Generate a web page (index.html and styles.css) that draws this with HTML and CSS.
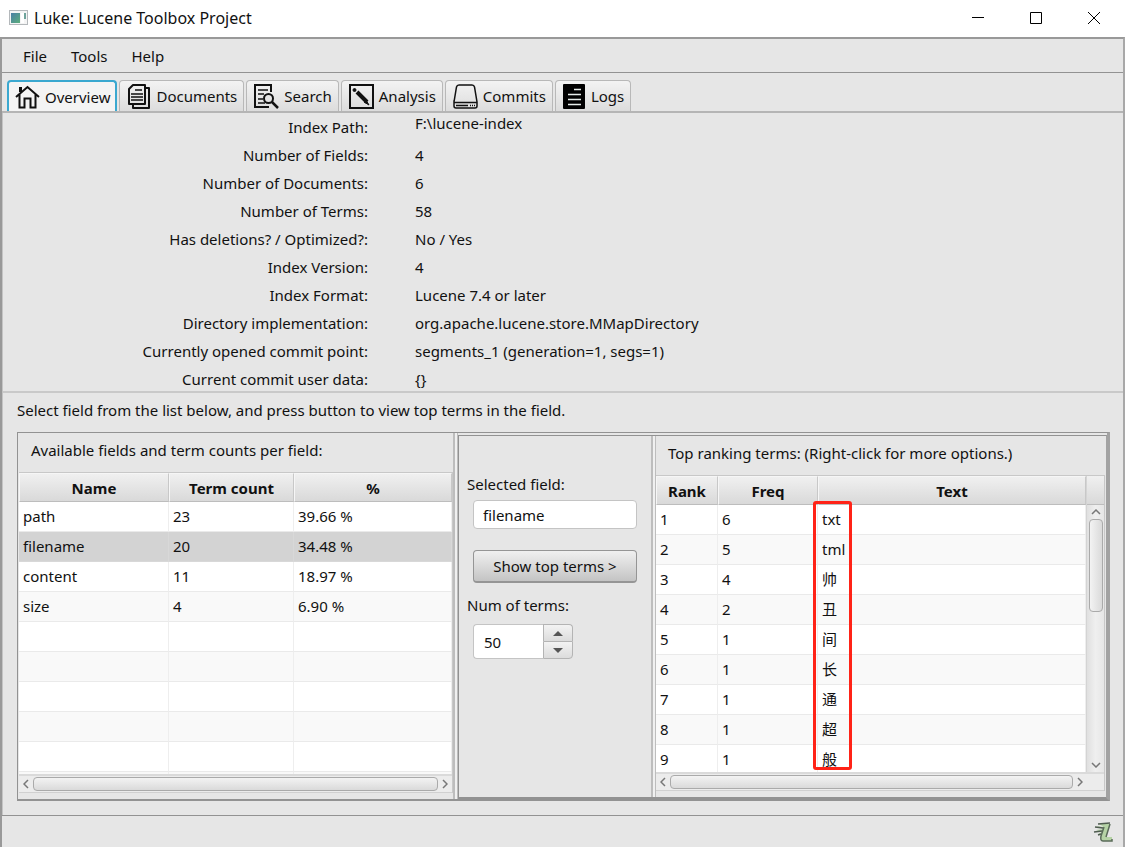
FILE: index.html
```html
<!DOCTYPE html>
<html lang="en">
<head>
    <meta charset="UTF-8">
    <meta name="viewport" content="width=device-width, initial-scale=1.0">
    <title>Luke: Lucene Toolbox Project</title>
    <link rel="stylesheet" href="styles.css">
</head>
<body>

<header class="titlebar">
    <svg class="app-icon" width="19" height="16" viewBox="0 0 19 16">
        <defs>
            <linearGradient id="appFill" x1="0" y1="0" x2="1" y2="1">
                <stop offset="0" stop-color="#4a7fa5"/>
                <stop offset="1" stop-color="#5cae7c"/>
            </linearGradient>
        </defs>
        <rect x="0.5" y="0.5" width="18" height="14" fill="#f4f4f4" stroke="#b4b8bb"/>
        <rect x="2" y="3" width="9" height="10" fill="url(#appFill)"/>
        <rect x="12" y="3" width="3" height="10" fill="#fff"/>
        <rect x="15" y="3" width="2" height="6" fill="#6fa39b"/>
    </svg>
    <h1>Luke: Lucene Toolbox Project</h1>
    <div class="window-buttons">
        <button aria-label="Minimize"><svg width="12" height="12" viewBox="0 0 12 12"><path d="M0 5.500h12"/></svg></button>
        <button aria-label="Maximize"><svg width="12" height="12" viewBox="0 0 12 12"><path d="M.5.5h11v11H.5z"/></svg></button>
        <button aria-label="Close"><svg width="12" height="12" viewBox="0 0 12 12"><path d="M0 0l12 12M12 0L0 12"/></svg></button>
    </div>
</header>

<div class="window">
    <nav class="menubar">
        <button>File</button>
        <button>Tools</button>
        <button>Help</button>
    </nav>

    <div class="tabs">
        <button class="tab active">
            <svg width="25" height="24" viewBox="0 0 25 24" fill="none" stroke="#111" stroke-width="2">
                <path d="M1 12L12.500 2 24 12M4.500 9V22.500H9.500V13.500H15.500V22.500H20.500V9"/>
                <path d="M5.500 7V2" stroke-width="3"/>
            </svg>
            Overview
        </button>
        <button class="tab">
            <svg width="24" height="25" viewBox="0 0 24 25" fill="none" stroke="#111" stroke-width="2">
                <path d="M6 1H18V20H2V5z" stroke-linejoin="round"/>
                <path d="M19 4H22V24H6V21" stroke-linejoin="round"/>
                <path d="M8 6h7M4 10h12M4 13h12M4 16h12" stroke-width="1.500"/>
            </svg>
            Documents
        </button>
        <button class="tab">
            <svg width="25" height="25" viewBox="0 0 25 25" fill="none" stroke="#111" stroke-width="2">
                <path d="M17 8V1H1V23H15"/>
                <path d="M4 6h10M4 10h6M4 15h5M4 19h7" stroke-width="1.500"/>
                <circle cx="14.500" cy="14.500" r="4.500"/>
                <path d="M18 18l6 6" stroke-width="2.500"/>
            </svg>
            Search
        </button>
        <button class="tab">
            <svg width="25" height="25" viewBox="0 0 25 25" fill="none" stroke="#111">
                <rect x="1" y="1" width="23" height="23" stroke-width="2"/>
                <circle cx="5.500" cy="6" r="1.500" fill="#111"/>
                <path d="M8 8l10 10" stroke-width="4"/>
                <path d="M17 16l3 5-5-3z" fill="#111"/>
            </svg>
            Analysis
        </button>
        <button class="tab">
            <svg width="25" height="25" viewBox="0 0 25 25" fill="none" stroke="#111" stroke-width="1.500">
                <path d="M1 18L3.500 3Q4 1 6 1H19Q21 1 21.500 3L24 18V22Q24 24 22 24H3Q1 24 1 22V18Q1.500 18.500 3 18.500H22Q23.500 18.500 24 18"/>
                <path d="M3 21.500h12M17 21.500h1M19 21.500h1M21 21.500h1"/>
            </svg>
            Commits
        </button>
        <button class="tab">
            <svg width="23" height="25" viewBox="0 0 23 25">
                <rect width="22" height="25" rx="1" fill="#000"/>
                <path d="M11 5.500h7M5 10.500h13M5 15.500h13M5 20.500h13" stroke="#e6ece9" stroke-width="1.500"/>
            </svg>
            Logs
        </button>
    </div>

    <main class="content">
        <dl class="details">
            <dt>Index Path:</dt><dd class="path">F:\lucene-index</dd>
            <dt>Number of Fields:</dt><dd>4</dd>
            <dt>Number of Documents:</dt><dd>6</dd>
            <dt>Number of Terms:</dt><dd>58</dd>
            <dt>Has deletions? / Optimized?:</dt><dd>No / Yes</dd>
            <dt>Index Version:</dt><dd>4</dd>
            <dt>Index Format:</dt><dd>Lucene 7.4 or later</dd>
            <dt>Directory implementation:</dt><dd>org.apache.lucene.store.MMapDirectory</dd>
            <dt>Currently opened commit point:</dt><dd>segments_1 (generation=1, segs=1)</dd>
            <dt>Current commit user data:</dt><dd>{}</dd>
        </dl>

        <section class="terms">
            <p class="hint">Select field from the list below, and press button to view top terms in the field.</p>

            <div class="split">
                <div class="pane fields-pane">
                    <h2>Available fields and term counts per field:</h2>
                    <div class="table-view">
                        <div class="rows">
                            <table class="fields">
                                <colgroup><col class="name"><col class="count"><col></colgroup>
                                <thead>
                                    <tr><th>Name</th><th>Term count</th><th>%</th></tr>
                                </thead>
                                <tbody>
                                    <tr><td>path</td><td>23</td><td>39.66 %</td></tr>
                                    <tr class="selected"><td>filename</td><td>20</td><td>34.48 %</td></tr>
                                    <tr><td>content</td><td>11</td><td>18.97 %</td></tr>
                                    <tr><td>size</td><td>4</td><td>6.90 %</td></tr>
                                    <tr><td></td><td></td><td></td></tr>
                                    <tr><td></td><td></td><td></td></tr>
                                    <tr><td></td><td></td><td></td></tr>
                                    <tr><td></td><td></td><td></td></tr>
                                    <tr><td></td><td></td><td></td></tr>
                                    <tr><td></td><td></td><td></td></tr>
                                </tbody>
                            </table>
                        </div>
                        <div class="hscroll">
                            <button aria-label="Scroll left"><svg width="6" height="10" viewBox="0 0 6 10"><path d="M5 1L1 5l4 4"/></svg></button>
                            <div class="thumb"></div>
                            <button aria-label="Scroll right"><svg width="6" height="10" viewBox="0 0 6 10"><path d="M1 1l4 4-4 4"/></svg></button>
                        </div>
                    </div>
                </div>

                <div class="divider"></div>

                <div class="split inner">
                    <form class="pane form-pane">
                        <label for="field">Selected field:</label>
                        <input type="text" id="field" value="filename">
                        <button type="button" class="show-terms">Show top terms &gt;</button>
                        <label for="num">Num of terms:</label>
                        <div class="spinner">
                            <input type="text" id="num" value="50">
                            <div class="arrows">
                                <button type="button" aria-label="Increase"><svg width="10" height="5" viewBox="0 0 10 5"><path d="M0 5l5-5 5 5z"/></svg></button>
                                <button type="button" aria-label="Decrease"><svg width="10" height="5" viewBox="0 0 10 5"><path d="M0 0l5 5 5-5z"/></svg></button>
                            </div>
                        </div>
                    </form>

                    <div class="divider"></div>

                    <div class="pane terms-pane">
                        <h2>Top ranking terms: (Right-click for more options.)</h2>
                        <div class="table-view with-vscroll">
                            <div class="rows">
                                <table class="ranking">
                                    <colgroup><col class="rank"><col class="freq"><col></colgroup>
                                    <thead>
                                        <tr><th>Rank</th><th>Freq</th><th>Text</th></tr>
                                    </thead>
                                    <tbody>
                                        <tr><td>1</td><td>6</td><td>txt</td></tr>
                                        <tr><td>2</td><td>5</td><td>tml</td></tr>
                                        <tr><td>3</td><td>4</td><td lang="zh">帅</td></tr>
                                        <tr><td>4</td><td>2</td><td lang="zh">丑</td></tr>
                                        <tr><td>5</td><td>1</td><td lang="zh">间</td></tr>
                                        <tr><td>6</td><td>1</td><td lang="zh">长</td></tr>
                                        <tr><td>7</td><td>1</td><td lang="zh">通</td></tr>
                                        <tr><td>8</td><td>1</td><td lang="zh">超</td></tr>
                                        <tr><td>9</td><td>1</td><td lang="zh">般</td></tr>
                                    </tbody>
                                </table>
                            </div>
                            <div class="vscroll">
                                <div class="corner"></div>
                                <button aria-label="Scroll up"><svg width="10" height="6" viewBox="0 0 10 6"><path d="M1 5l4-4 4 4"/></svg></button>
                                <div class="thumb"></div>
                                <button class="down" aria-label="Scroll down"><svg width="10" height="6" viewBox="0 0 10 6"><path d="M1 1l4 4 4-4"/></svg></button>
                            </div>
                            <div class="hscroll">
                                <button aria-label="Scroll left"><svg width="6" height="10" viewBox="0 0 6 10"><path d="M5 1L1 5l4 4"/></svg></button>
                                <div class="thumb"></div>
                                <button aria-label="Scroll right"><svg width="6" height="10" viewBox="0 0 6 10"><path d="M1 1l4 4-4 4"/></svg></button>
                            </div>
                            <div class="highlight"></div>
                        </div>
                    </div>
                </div>
            </div>
        </section>
    </main>

    <footer class="statusbar">
        <svg width="20" height="20" viewBox="0 0 20 20">
            <path d="M6 2H17L13 15H19V19H10Q7 18 8 13L5 12L9 10L3 8L10 7L3 4L11 5z" fill="#b5d3a5"/>
            <path d="M5 2L17 1M2 5L10 6M1 10L9 9M5 13L8 12" stroke="#4f5c50" stroke-width="1.500" fill="none"/>
            <path d="M17 2L13 15M11 5L8 14Q7 19 10 19H19V17" stroke="#596b58" stroke-width="1.500" fill="none"/>
        </svg>
    </footer>
</div>

</body>
</html>
```
FILE: styles.css
```css
* {
    box-sizing: border-box;
}

body {
    display: flex;
    flex-direction: column;
    min-height: 100vh;
    margin: 0;
    font-family: "Noto Sans", "Noto Sans CJK SC", sans-serif;
    font-size: 15px;
    line-height: 20px;
    color: #111;
    background-color: #e6e6e6;
}

button,
input {
    font: inherit;
    color: inherit;
}

button {
    display: flex;
    align-items: center;
    justify-content: center;
    margin: 0;
    padding: 0;
    border: none;
    background: none;
}

h1,
h2 {
    margin: 0;
    font-size: 15px;
    font-weight: normal;
}

/* Title bar */
.titlebar {
    display: flex;
    align-items: center;
    height: 37px;
    padding: 0 2px 2px 9px;
    background-color: #fff;
}

.titlebar h1 {
    margin-left: 6px;
    font-size: 16px;
}

.window-buttons {
    display: flex;
    margin-left: auto;
}

.window-buttons button {
    width: 58px;
    height: 35px;
}

.window-buttons svg {
    fill: none;
    stroke: #000;
}

/* Window frame */
.window {
    display: flex;
    flex: 1;
    flex-direction: column;
    border: 2px solid #999;
    border-right-color: #a8a8a8;
    border-bottom: none;
}

.menubar {
    display: flex;
    gap: 24px;
    height: 34px;
    padding: 0 21px;
    border-bottom: 1px solid #929292;
}

.tabs {
    display: flex;
    gap: 2px;
    height: 40px;
    padding: 7px 5px 0;
    border-bottom: 2px solid #b5b5b5;
}

.tab {
    gap: 5px;
    padding: 0 6px 0 7px;
    border: 1px solid #b8b8b8;
    border-bottom: none;
    border-radius: 4px 4px 0 0;
    background: linear-gradient(#f3f3f3, #dcdcdc);
}

.tab.active {
    padding: 0 5px 0 6px;
    border: 2px solid #3aa8d0;
    border-bottom: none;
    background: #f4f4f4;
}

/* Index details */
.content {
    display: flex;
    flex: 1;
    flex-direction: column;
    border-left: 1px solid #c4c4c4;
}

.details {
    display: grid;
    grid-template-columns: 365px 1fr;
    grid-auto-rows: 28px;
    column-gap: 47px;
    align-items: center;
    margin: 0;
    box-shadow: inset 0 -2px #c9c9c9;
}

.details dt {
    text-align: right;
}

.details dd {
    margin: 0;
}

.details .path {
    align-self: start;
}

/* Terms section */
.terms {
    display: flex;
    flex: 1;
    flex-direction: column;
    padding: 7px 13px 14px 14px;
}

.hint {
    margin: 0 0 12px;
}

.split {
    display: flex;
    flex: 1;
    border: 1px solid #929292;
    border-right: 3px solid #a2a2a2;
    border-bottom-width: 2px;
}

.split.inner {
    flex: 650 1 0;
    margin-top: 2px;
    border-right-width: 1px;
}

.divider {
    width: 5px;
    border: 1px solid #bdbdbd;
    border-width: 0 1px 0 2px;
    background-color: #f0f0f0;
}

.pane {
    display: flex;
    flex-direction: column;
}

.pane h2 {
    padding: 7px 12px 12px;
}

.fields-pane {
    flex: 436 1 0;
    padding: 0 0 6px 1px;
}

.form-pane {
    width: 192px;
    padding: 38px 8px 0;
}

.terms-pane {
    flex: 1;
    padding-bottom: 6px;
}

/* Tables */
.table-view {
    position: relative;
    display: grid;
    flex: 1;
    grid-template-columns: 1fr;
    grid-template-rows: 1fr 19px;
    border-top: 1px solid #c8c8c8;
    border-right: 1px solid #c8c8c8;
}

.table-view.with-vscroll {
    grid-template-columns: 1fr 18px;
    margin-right: 1px;
}

/* a clipped view: rows never push the frame taller */
.rows {
    height: 0;
    min-height: 100%;
    overflow: hidden;
    background-color: #fff;
}

table {
    width: 100%;
    table-layout: fixed;
    border-spacing: 0;
}

.name {
    width: 150px;
}

.count {
    width: 125px;
}

.rank {
    width: 62px;
}

.freq {
    width: 100px;
}

th {
    height: 29px;
    padding: 0;
    border: 1px solid #f6f6f6;
    border-right-color: #c8c8c8;
    border-bottom-color: #bdbdbd;
    background: linear-gradient(#f0f0f0, #d9d9d9);
    font-weight: bold;
}

td {
    height: 30px;
    padding: 0 4px 2px;
    border-right: 1px solid #eee;
    border-bottom: 1px solid #eaeaea;
}

tbody tr:nth-child(even) {
    background-color: #f9f9f9;
}

tbody tr.selected {
    background-color: #d3d3d3;
}

.selected td {
    border-color: #d8d8d8;
}

/* Scroll bars */
.hscroll {
    display: flex;
    grid-column: 1 / -1;
    border-top: 2px solid #dadada;
    border-bottom: 1px solid #d0d0d0;
    background-color: #ececec;
}

.hscroll button,
.vscroll button {
    flex: none;
    width: 14px;
}

.hscroll svg,
.vscroll svg {
    fill: none;
    stroke: #777;
    stroke-width: 1.5;
}

.hscroll .thumb {
    flex: 1;
    height: 14px;
    margin: 1px 0;
    border: 1px solid #aaa;
    border-radius: 4px;
    background: linear-gradient(#f3f3f3, #dadada);
}

.with-vscroll .hscroll {
    padding-right: 17px;
}

.vscroll {
    display: flex;
    flex-direction: column;
    align-items: center;
    border-left: 1px solid #d4d4d4;
    background: linear-gradient(to right, #e0e0e0, #efefef, #e6e6e6);
}

.vscroll .corner {
    width: 100%;
    height: 29px;
    border-bottom: 1px solid #bdbdbd;
    background: linear-gradient(#f0f0f0, #d9d9d9);
}

.vscroll button {
    height: 14px;
}

.vscroll .thumb {
    width: 14px;
    height: 93px;
    border: 1px solid #aaa;
    border-radius: 4px;
    background: linear-gradient(to right, #f3f3f3, #dadada);
}

.vscroll .down {
    margin-top: auto;
}

/* Form */
.form-pane input {
    min-width: 0;
    margin: 0;
    border: 1px solid #c4c4c4;
    border-radius: 4px;
    background-color: #fff;
}

.form-pane > input {
    height: 29px;
    margin: 6px 6px 21px;
    padding: 0 9px;
}

.show-terms {
    height: 33px;
    margin: 0 6px 12px;
    border: 1px solid #959595;
    border-bottom-width: 2px;
    border-radius: 4px;
    background: linear-gradient(#f0f0f0, #c4c4c4);
}

.spinner {
    display: flex;
    width: 100px;
    height: 35px;
    margin: 9px 6px 0;
}

.spinner input {
    width: 70px;
    padding: 0 10px;
    border-right: none;
    border-radius: 4px 0 0 4px;
}

.arrows {
    display: flex;
    flex: 1;
    flex-direction: column;
}

.arrows button {
    flex: 1;
    border: 1px solid #b4b4b4;
    background: linear-gradient(#f3f3f3, #dcdcdc);
}

.arrows button:first-child {
    border-bottom: none;
    border-radius: 0 4px 0 0;
}

.arrows button:last-child {
    border-radius: 0 0 4px 0;
}

.arrows svg {
    fill: #555;
}

/* Red marker over the text column */
.highlight {
    position: absolute;
    top: 25px;
    left: 157px;
    width: 39px;
    height: 269px;
    border: 3px solid #ff2317;
    border-radius: 3px;
}

/* Status bar */
.statusbar {
    display: flex;
    align-items: center;
    justify-content: flex-end;
    height: 32px;
    padding-right: 10px;
    border-top: 1px solid #929292;
}
```
